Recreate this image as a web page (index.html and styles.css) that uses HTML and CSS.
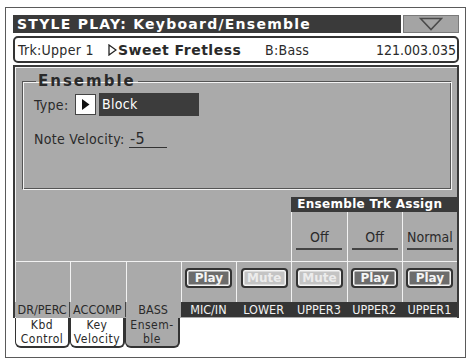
FILE: index.html
```html
<!DOCTYPE html>
<html>
<head>
<meta charset="utf-8">
<link rel="stylesheet" href="styles.css">
</head>
<body>
<div class="screen">
  <div class="titlerow">
    <div class="title">STYLE PLAY: Keyboard/Ensemble</div>
    <div class="menu">
      <svg width="24" height="14" viewBox="0 0 24 14"><path d="M1.5 1.5 L22.5 1.5 L12 12.5 Z" fill="none" stroke="#4a4a4a" stroke-width="1.6"/></svg>
    </div>
  </div>
  <div class="trk">
    <span class="trk-name">Trk:Upper 1</span>
    <span class="sound"><svg class="tri" width="9" height="12" viewBox="0 0 9 12"><path d="M1 1 L8 6 L1 11 Z" fill="none" stroke="#222" stroke-width="1.3"/></svg>Sweet Fretless</span>
    <span class="bank">B:Bass</span>
    <span class="num">121.003.035</span>
  </div>
  <div class="panel">
    <fieldset class="group">
      <legend class="legend">Ensemble</legend>
      <div class="row type-row">
        <span class="lbl">Type:</span>
        <span class="arrowbox"><svg width="9" height="11" viewBox="0 0 9 11"><path d="M1 0 L8.5 5.5 L1 11 Z" fill="#111"/></svg></span>
        <span class="field">Block</span>
      </div>
      <div class="row vel-row">
        <span class="lbl">Note Velocity:</span>
        <span class="uval">-5</span>
      </div>
    </fieldset>
    <div class="assign">
      <div class="ahead">Ensemble Trk Assign</div>
      <div class="acell c6"><span class="aval">Off</span></div>
      <div class="acell c7"><span class="aval">Off</span></div>
      <div class="acell c8"><span class="aval">Normal</span></div>
    </div>
    <div class="tracks">
      <div class="tcell first"></div>
      <div class="tcell"></div>
      <div class="tcell"></div>
      <div class="tcell"><span class="btn play">Play</span></div>
      <div class="tcell"><span class="btn mute">Mute</span></div>
      <div class="tcell"><span class="btn mute">Mute</span></div>
      <div class="tcell"><span class="btn play">Play</span></div>
      <div class="tcell"><span class="btn play">Play</span></div>
    </div>
    <div class="labels">
      <div class="lcell light">DR/PERC</div>
      <div class="lcell light">ACCOMP</div>
      <div class="lcell light sel">BASS</div>
      <div class="lcell">MIC/IN</div>
      <div class="lcell">LOWER</div>
      <div class="lcell">UPPER3</div>
      <div class="lcell">UPPER2</div>
      <div class="lcell">UPPER1</div>
    </div>
  </div>
  <div class="tabs">
    <div class="tab"><span class="tl">Kbd</span><span class="tl">Control</span></div>
    <div class="tab"><span class="tl">Key</span><span class="tl">Velocity</span></div>
    <div class="tab active"><span class="tl">Ensem-</span><span class="tl">ble</span></div>
  </div>
</div>
</body>
</html>
```
FILE: styles.css
```css
* { box-sizing: border-box; }
body {
  margin: 0;
  background: #fff;
  font-family: "DejaVu Sans Condensed", "DejaVu Sans", sans-serif;
  color: #2a2a2a;
}
.screen {
  margin: 7px 0 0 5px;
  width: 461px;
  height: 351px;
  border: 1px solid #5a5a5a;
  padding: 7px 6px 0 7px;
}
.titlerow {
  display: flex;
  height: 18px;
  gap: 2px;
}
.title {
  flex: 1;
  background: #3a3a3a;
  color: #fff;
  font-family: "DejaVu Sans", sans-serif;
  font-weight: bold;
  font-size: 14px;
  letter-spacing: 1.25px;
  line-height: 18px;
  padding-left: 4px;
  white-space: nowrap;
}
.menu {
  width: 56px;
  background: #a4a4a4;
  border: 1px solid #7a7a7a;
  display: flex;
  align-items: center;
  justify-content: center;
}
.trk {
  margin-top: 3px;
  height: 27px;
  border: 2px solid #333;
  border-radius: 5px;
  background: #fff;
  display: flex;
  align-items: center;
  padding: 0 1px 0 3px;
  font-size: 14px;
  letter-spacing: 0.3px;
  white-space: nowrap;
}
.trk-name { width: 90px; }
.sound {
  width: 157px;
  font-weight: bold;
  font-family: "DejaVu Sans", sans-serif;
  letter-spacing: 0.5px;
  display: flex;
  align-items: center;
}
.tri { margin-right: 1px; }
.bank { flex: 1; }
.num { letter-spacing: 0; }
.panel {
  margin-top: 2px;
  height: 253px;
  background: #aaaaaa;
  border: 2px solid #3a3a3a;
  border-bottom: 0;
  box-shadow: inset 1px 1px 0 #f4f4f4;
  display: flex;
  flex-direction: column;
}
.group {
  margin: 5px 5px 0 7px;
  padding: 3px 0 0 11px;
  height: 118px;
  border: 1px solid;
  border-color: #555 #f4f4f4 #f4f4f4 #555;
  box-shadow: inset 1px 1px 0 #f4f4f4, inset -1px -1px 0 #555;
}
.legend {
  margin-left: 2px;
  padding: 0 2px;
  font-family: "DejaVu Sans", sans-serif;
  font-weight: bold;
  font-size: 15px;
  letter-spacing: 2px;
  color: #2a2a2a;
}
.row {
  display: flex;
  align-items: center;
  font-size: 14px;
  letter-spacing: 0.3px;
}
.type-row { height: 23px; }
.type-row .lbl { width: 41px; }
.arrowbox {
  width: 21px;
  height: 21px;
  background: #fff;
  border: 1px solid #444;
  display: flex;
  align-items: center;
  justify-content: center;
  margin-right: 3px;
}
.field {
  width: 100px;
  height: 23px;
  background: #3c3c3c;
  color: #fff;
  padding-left: 3px;
  line-height: 23px;
  font-size: 14px;
}
.vel-row { margin-top: 14px; height: 18px; }
.vel-row .lbl { width: 95px; }
.uval {
  width: 38px;
  border-bottom: 1px solid #333;
  font-size: 16px;
  line-height: 17px;
  padding-left: 1px;
}
.assign {
  height: 71px;
  display: grid;
  grid-template-columns: repeat(8, 1fr);
  grid-template-rows: 22px 1fr;
}
.ahead {
  grid-column: 6 / 9;
  grid-row: 1;
  align-self: end;
  height: 15px;
  background: #3a3a3a;
  color: #fff;
  font-family: "DejaVu Sans", sans-serif;
  font-weight: bold;
  font-size: 12px;
  letter-spacing: 0.3px;
  line-height: 15px;
  padding-left: 6px;
  white-space: nowrap;
}
.acell {
  grid-row: 2;
  border-left: 1px solid #f2f2f2;
  display: flex;
  justify-content: center;
  padding-top: 17px;
}
.c6 { grid-column: 6; }
.c7 { grid-column: 7; }
.c8 { grid-column: 8; }
.aval {
  width: 46px;
  height: 21px;
  text-align: center;
  font-size: 14px;
  border-bottom: 2px solid #444;
  line-height: 16px;
}
.tracks {
  height: 41px;
  border-top: 1px solid #f2f2f2;
  display: grid;
  grid-template-columns: repeat(8, 1fr);
}
.tcell {
  border-left: 1px solid #f2f2f2;
  display: flex;
  justify-content: center;
  padding-top: 6px;
}
.tcell.first { border-left: 0; }
.btn {
  width: 47px;
  height: 20px;
  border: 2px solid #333;
  border-radius: 4px;
  box-shadow: inset 0 0 0 1.5px #f4f4f4;
  font-family: "DejaVu Sans", sans-serif;
  font-weight: bold;
  font-size: 12px;
  text-align: center;
  line-height: 16px;
}
.play { background: #6c6c6c; color: #f4f4f4; }
.mute { background: #c4c4c4; color: #ececec; }
.labels {
  height: 15px;
  display: grid;
  grid-template-columns: repeat(8, 1fr);
  background: #353535;
}
.lcell {
  color: #f2f2f2;
  font-size: 12.5px;
  line-height: 15px;
  text-align: center;
  white-space: nowrap;
}
.lcell.light {
  background: #aaaaaa;
  color: #2a2a2a;
  border-right: 1px solid #444;
}
.lcell.sel { border-right: 0; }
.tabs {
  display: flex;
  height: 30px;
  padding-left: 2px;
}
.tab {
  width: 55px;
  background: #fff;
  border: 1px solid #333;
  border-top: 0;
  border-right-width: 2px;
  border-bottom-width: 2px;
  border-radius: 0 0 6px 6px;
  display: flex;
  flex-direction: column;
  align-items: center;
}
.tl {
  font-size: 12px;
  line-height: 14px;
  height: 14px;
  letter-spacing: 0.5px;
  white-space: nowrap;
}
.tab.active { background: #aaaaaa; }
```
